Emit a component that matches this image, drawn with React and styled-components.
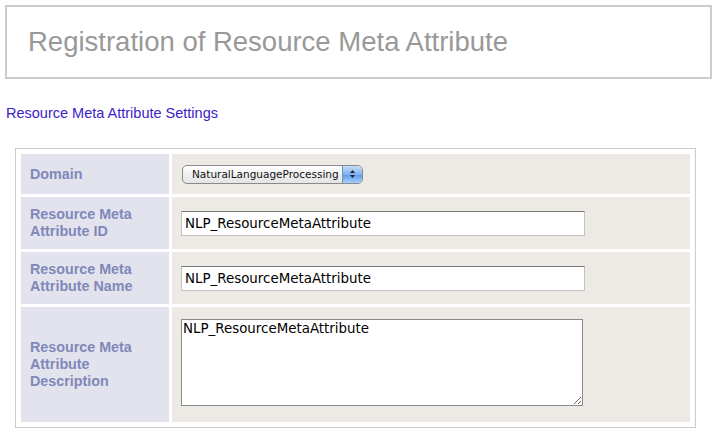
import styled, { createGlobalStyle } from 'styled-components'

const GlobalStyle = createGlobalStyle`
  html, body {
    margin: 0;
    padding: 0;
    background: #fff;
  }
  body {
    font-family: "Liberation Sans", Arial, sans-serif;
  }
`

const fields = [
  { label: 'Domain', kind: 'select', value: 'NaturalLanguageProcessing', height: 40 },
  { label: 'Resource Meta Attribute ID', kind: 'input', value: 'NLP_ResourceMetaAttribute', height: 52 },
  { label: 'Resource Meta Attribute Name', kind: 'input', value: 'NLP_ResourceMetaAttribute', height: 52 },
  { label: 'Resource Meta Attribute Description', kind: 'textarea', value: 'NLP_ResourceMetaAttribute', height: 115 },
]

const Stepper = () => (
  <StepperBox>
    <svg width="7" height="10" viewBox="0 0 7 10">
      <path d="M3.5 1 L6 4 L1 4 Z" fill="#1a1f3a" />
      <path d="M3.5 9 L6 6 L1 6 Z" fill="#1a1f3a" />
    </svg>
  </StepperBox>
)

const Field = ({ field }) => {
  if (field.kind === 'select') {
    return (
      <SelectBox>
        <Select defaultValue={field.value}>
          <option>{field.value}</option>
        </Select>
        <Stepper />
      </SelectBox>
    )
  }
  if (field.kind === 'textarea') {
    return <TextArea defaultValue={field.value} />
  }
  return <TextInput defaultValue={field.value} />
}

const App = () => {
  return (
    <Page>
      <GlobalStyle />
      <Header>
        <Title>Registration of Resource Meta Attribute</Title>
      </Header>
      <SectionLink>Resource Meta Attribute Settings</SectionLink>
      <FormTable>
        {fields.map((f) => (
          <Row key={f.label} $height={f.height}>
            <Label>{f.label}</Label>
            <Value>
              <Field field={f} />
            </Value>
          </Row>
        ))}
      </FormTable>
    </Page>
  )
}

export default App

const Page = styled.div`
  padding: 5px 5px 0 5px;
`

const Header = styled.div`
  height: 70px;
  border: 2px solid #cccccc;
  display: flex;
  align-items: center;
  padding-left: 21px;
  box-sizing: content-box;
  width: 682px;
`

const Title = styled.h1`
  margin: 0;
  font-family: "Liberation Sans", Arial, sans-serif;
  font-weight: normal;
  font-size: 27.5px;
  color: #999999;
`

const SectionLink = styled.div`
  margin: 26px 0 0 1px;
  font-size: 14.5px;
  color: #3a22c8;
  height: 17px;
  line-height: 17px;
`

const FormTable = styled.div`
  margin: 26px 0 0 10px;
  width: 669px;
  border: 1px solid #cccccc;
  padding: 5px;
  display: grid;
  gap: 3px;
`

const Row = styled.div`
  display: grid;
  grid-template-columns: 148px 1fr;
  gap: 3px;
  height: ${(p) => p.$height}px;
`

const Label = styled.div`
  background: #e3e3ee;
  display: flex;
  align-items: center;
  padding: 0 12px 0 9px;
  font-weight: bold;
  font-size: 14.3px;
  line-height: 17px;
  color: #8088b9;
`

const Value = styled.div`
  background: #edeae6;
  display: flex;
  align-items: center;
  padding-left: 9px;
`

const SelectBox = styled.div`
  display: flex;
  align-items: stretch;
  width: 179px;
  height: 17px;
  margin-left: 1px;
  border: 1px solid #8a8a8a;
  border-radius: 5px;
  background: linear-gradient(#ffffff, #f1f1f1 50%, #e4e4e4);
  overflow: hidden;
`

const Select = styled.select`
  appearance: none;
  flex: 1;
  border: none;
  background: transparent;
  padding: 0 0 0 9px;
  font-family: "DejaVu Sans", sans-serif;
  font-size: 10.5px;
  color: #111;
  outline: none;
`

const StepperBox = styled.span`
  width: 19px;
  display: flex;
  align-items: center;
  justify-content: center;
  background: linear-gradient(#c7ddf7, #7fb2ec 50%, #5b9ae6 51%, #a8d0fa);
  border-left: 1px solid #6a8fbf;
`

const TextInput = styled.input`
  box-sizing: border-box;
  width: 404px;
  height: 25px;
  border: 1px solid #c3c3c3;
  border-top-color: #7a7a7a;
  padding: 0 3px;
  font-family: "DejaVu Sans", sans-serif;
  font-size: 13.4px;
  color: #000;
  background: #fff;
  outline: none;
`

const TextArea = styled.textarea`
  box-sizing: border-box;
  width: 402px;
  height: 87px;
  margin-bottom: 4px;
  border: 1px solid #8a8a8a;
  padding: 1px 1px;
  font-family: "DejaVu Sans", sans-serif;
  font-size: 13.4px;
  color: #000;
  background: #fff;
  outline: none;
`
